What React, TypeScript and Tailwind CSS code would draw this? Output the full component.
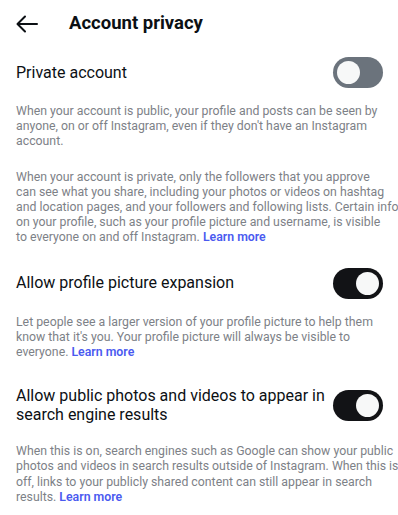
import React, { useState } from "react";

function Toggle({ on, onChange }: { on: boolean; onChange: () => void }) {
  return (
    <button
      onClick={onChange}
      className={`relative h-[31px] w-[50px] shrink-0 rounded-full ${on ? "bg-[#121316]" : "bg-[#6b737c]"}`}
    >
      <span
        className={`absolute top-[4px] h-[23px] w-[23px] rounded-full bg-[#f7f8f8] ${on ? "left-[23px]" : "left-[4px]"}`}
      />
    </button>
  );
}

function LearnMore() {
  return <span className="font-semibold text-[#4a5af0]">Learn more</span>;
}

// lines broken where the app breaks them
function Para({ lines, className = "" }: { lines: React.ReactNode[]; className?: string }) {
  return (
    <p className={`text-[12.3px] leading-[15.2px] text-[#7d8187] ${className}`}>
      {lines.map((l, i) => (
        <span key={i} className="block whitespace-nowrap">
          {l}
        </span>
      ))}
    </p>
  );
}

export default function App() {
  const [priv, setPriv] = useState(false);
  const [expand, setExpand] = useState(true);
  const [search, setSearch] = useState(true);

  return (
    <div className="min-h-[515px] w-[398px] overflow-hidden bg-white font-['Roboto',sans-serif] text-[#0c1014]">
      <header className="flex h-[46px] items-center px-4 pt-[2px]">
        <svg width="22" height="18" viewBox="0 0 22 18" fill="none" stroke="#0c1014" strokeWidth="2" strokeLinecap="round" strokeLinejoin="round">
          <path d="M21 9H2" />
          <path d="M9 1.5L1.5 9L9 16.5" />
        </svg>
        <h1 className="ml-[31px] text-[18.5px] font-bold">Account privacy</h1>
      </header>

      <div className="pl-4 pr-[15px] pt-[11px]">
        <div className="flex items-center justify-between gap-[6px]">
          <span className="text-[16px]">Private account</span>
          <Toggle on={priv} onChange={() => setPriv(!priv)} />
        </div>
        <div className="mt-[16px] space-y-[20px]">
          <Para
            lines={[
              "When your account is public, your profile and posts can be seen by",
              "anyone, on or off Instagram, even if they don't have an Instagram",
              "account.",
            ]}
          />
          <Para
            lines={[
              "When your account is private, only the followers that you approve",
              "can see what you share, including your photos or videos on hashtag",
              "and location pages, and your followers and following lists. Certain info",
              "on your profile, such as your profile picture and username, is visible",
              <>
                to everyone on and off Instagram. <LearnMore />
              </>,
            ]}
          />
        </div>

        <div className="mt-[22px] flex items-center justify-between gap-[6px]">
          <span className="text-[16px]">Allow profile picture expansion</span>
          <Toggle on={expand} onChange={() => setExpand(!expand)} />
        </div>
        <Para
          className="mt-[16px]"
          lines={[
            "Let people see a larger version of your profile picture to help them",
            "know that it's you. Your profile picture will always be visible to",
            <>
              everyone. <LearnMore />
            </>,
          ]}
        />

        <div className="mt-[26px] flex items-center justify-between gap-[6px]">
          <span className="text-[16px] leading-[19px]">Allow public photos and videos to appear in search engine results</span>
          <Toggle on={search} onChange={() => setSearch(!search)} />
        </div>
        <Para
          className="mt-[20px]"
          lines={[
            "When this is on, search engines such as Google can show your public",
            "photos and videos in search results outside of Instagram. When this is",
            "off, links to your publicly shared content can still appear in search",
            <>
              results. <LearnMore />
            </>,
          ]}
        />
      </div>
    </div>
  );
}
